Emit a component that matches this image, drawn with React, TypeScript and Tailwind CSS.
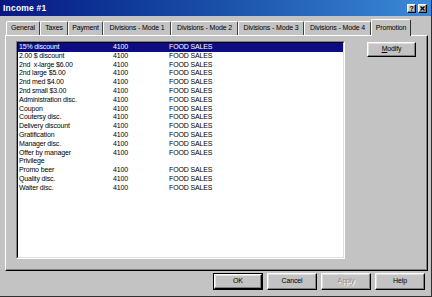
import React from 'react';

const rows: [string, string, string][] = [
  ['15% discount', '4100', 'FOOD SALES'],
  ['2.00 $ discount', '4100', 'FOOD SALES'],
  ['2nd  x-large $6.00', '4100', 'FOOD SALES'],
  ['2nd large $5.00', '4100', 'FOOD SALES'],
  ['2nd med $4.00', '4100', 'FOOD SALES'],
  ['2nd small $3.00', '4100', 'FOOD SALES'],
  ['Administration disc.', '4100', 'FOOD SALES'],
  ['Coupon', '4100', 'FOOD SALES'],
  ['Coutersy disc.', '4100', 'FOOD SALES'],
  ['Delivery discount', '4100', 'FOOD SALES'],
  ['Gratification', '4100', 'FOOD SALES'],
  ['Manager disc.', '4100', 'FOOD SALES'],
  ['Offer by manager', '4100', 'FOOD SALES'],
  ['Privilege', '', ''],
  ['Promo beer', '4100', 'FOOD SALES'],
  ['Quality disc.', '4100', 'FOOD SALES'],
  ['Waiter disc.', '4100', 'FOOD SALES'],
];

const tabs: { label: string; w: string; active?: boolean }[] = [
  { label: 'General', w: 'w-[34px]' },
  { label: 'Taxes', w: 'w-[28px]' },
  { label: 'Payment', w: 'w-[35px]' },
  { label: 'Divisions - Mode 1', w: 'w-[68px]' },
  { label: 'Divisions - Mode 2', w: 'w-[67px]' },
  { label: 'Divisions - Mode 3', w: 'w-[66px]' },
  { label: 'Divisions - Mode 4', w: 'w-[67px]' },
  { label: 'Promotion', w: 'w-[40px]', active: true },
];

const raised =
  'border border-t-white border-l-white border-r-black border-b-black shadow-[inset_-1px_-1px_#808080,inset_1px_1px_#dfdfdf]';

const Button: React.FC<{ children: React.ReactNode; primary?: boolean; disabled?: boolean; className?: string }> = ({
  children,
  primary,
  disabled,
  className = '',
}) => (
  <div className={`${primary ? 'border border-black' : ''} ${className}`}>
    <div
      className={`h-full w-full flex items-center justify-center ${raised} ${
        disabled ? 'text-[#8a8a8a] [text-shadow:1px_1px_#ffffff]' : 'text-black'
      }`}
    >
      {children}
    </div>
  </div>
);

export default function App() {
  return (
    <div className="w-[432px] h-[297px] bg-[#c3c3c3] border-b border-r border-[#303030] overflow-hidden text-[7px] text-black font-['Liberation_Sans',Arial,sans-serif] tracking-[-0.15px] select-none">
      {/* Title bar */}
      <div className="h-[16px] flex items-center justify-between pl-[3px] pr-[4px] bg-gradient-to-r from-[#0a1584] via-[#1a4fa8] to-[#3c8ad8]">
        <span className="text-white font-bold text-[8.5px] tracking-[0.2px]">Income #1</span>
        <div className="flex gap-[2px]">
          <div className={`w-[9px] h-[9px] bg-[#c3c3c3] ${raised} flex items-center justify-center font-bold text-[7px] leading-none`}>
            ?
          </div>
          <div className={`w-[9px] h-[9px] bg-[#c3c3c3] ${raised} flex items-center justify-center`}>
            <svg width="5" height="5" viewBox="0 0 5 5">
              <path d="M0.5 0.5 L4.5 4.5 M4.5 0.5 L0.5 4.5" stroke="#000" strokeWidth="1.3" />
            </svg>
          </div>
        </div>
      </div>

      <div className="pl-[5px] pt-[2px]">
        {/* Tabs */}
        <div className="flex items-end h-[17px] pl-[1px]">
          {tabs.map((t) =>
            t.active ? (
              <div
                key={t.label}
                className={`${t.w} h-[17px] relative z-10 -mb-px bg-[#c3c3c3] border-t border-l border-white border-r border-r-[#303030] rounded-t-[2px] flex items-start justify-center pt-[3px]`}
              >
                {t.label}
              </div>
            ) : (
              <div
                key={t.label}
                className={`${t.w} h-[14px] border-t border-l border-white border-r border-r-[#404040] rounded-t-[2px] flex items-center justify-center whitespace-nowrap`}
              >
                {t.label}
              </div>
            )
          )}
        </div>

        {/* Tab panel */}
        <div className="w-[423px] h-[236px] border border-t-white border-l-white border-r-black border-b-black shadow-[inset_-1px_-1px_#808080] flex pl-[10px] pt-[5px]">
          {/* List */}
          <div className="w-[329px] h-[218px] border border-t-[#808080] border-l-[#808080] border-r-white border-b-white">
            <div className="w-full h-full bg-white border border-t-black border-l-black border-r-[#dfdfdf] border-b-[#dfdfdf]">
              {rows.map(([name, code, cat], i) => (
                <div
                  key={name}
                  className={`flex h-[8.8px] leading-[8.8px] whitespace-pre ${
                    i === 0 ? 'bg-[#0c0c84] text-white' : 'text-black'
                  }`}
                >
                  <span className="w-[95px] pl-[1px]">{name}</span>
                  <span className="w-[56px]">{code}</span>
                  <span>{cat}</span>
                </div>
              ))}
            </div>
          </div>

          {/* Side buttons */}
          <div className="ml-[22px] mt-[1px]">
            <Button className="w-[49px] h-[15px]">
              <span>
                <span className="underline">M</span>odify
              </span>
            </Button>
          </div>
        </div>
      </div>

      {/* Bottom buttons */}
      <div className="flex justify-end gap-[4px] pr-[6px] mt-[2px]">
        <Button primary className="w-[50px] h-[17px]">
          OK
        </Button>
        <Button className="w-[50px] h-[17px]">Cancel</Button>
        <Button disabled className="w-[50px] h-[17px]">
          Apply
        </Button>
        <Button className="w-[50px] h-[17px]">Help</Button>
      </div>
    </div>
  );
}
